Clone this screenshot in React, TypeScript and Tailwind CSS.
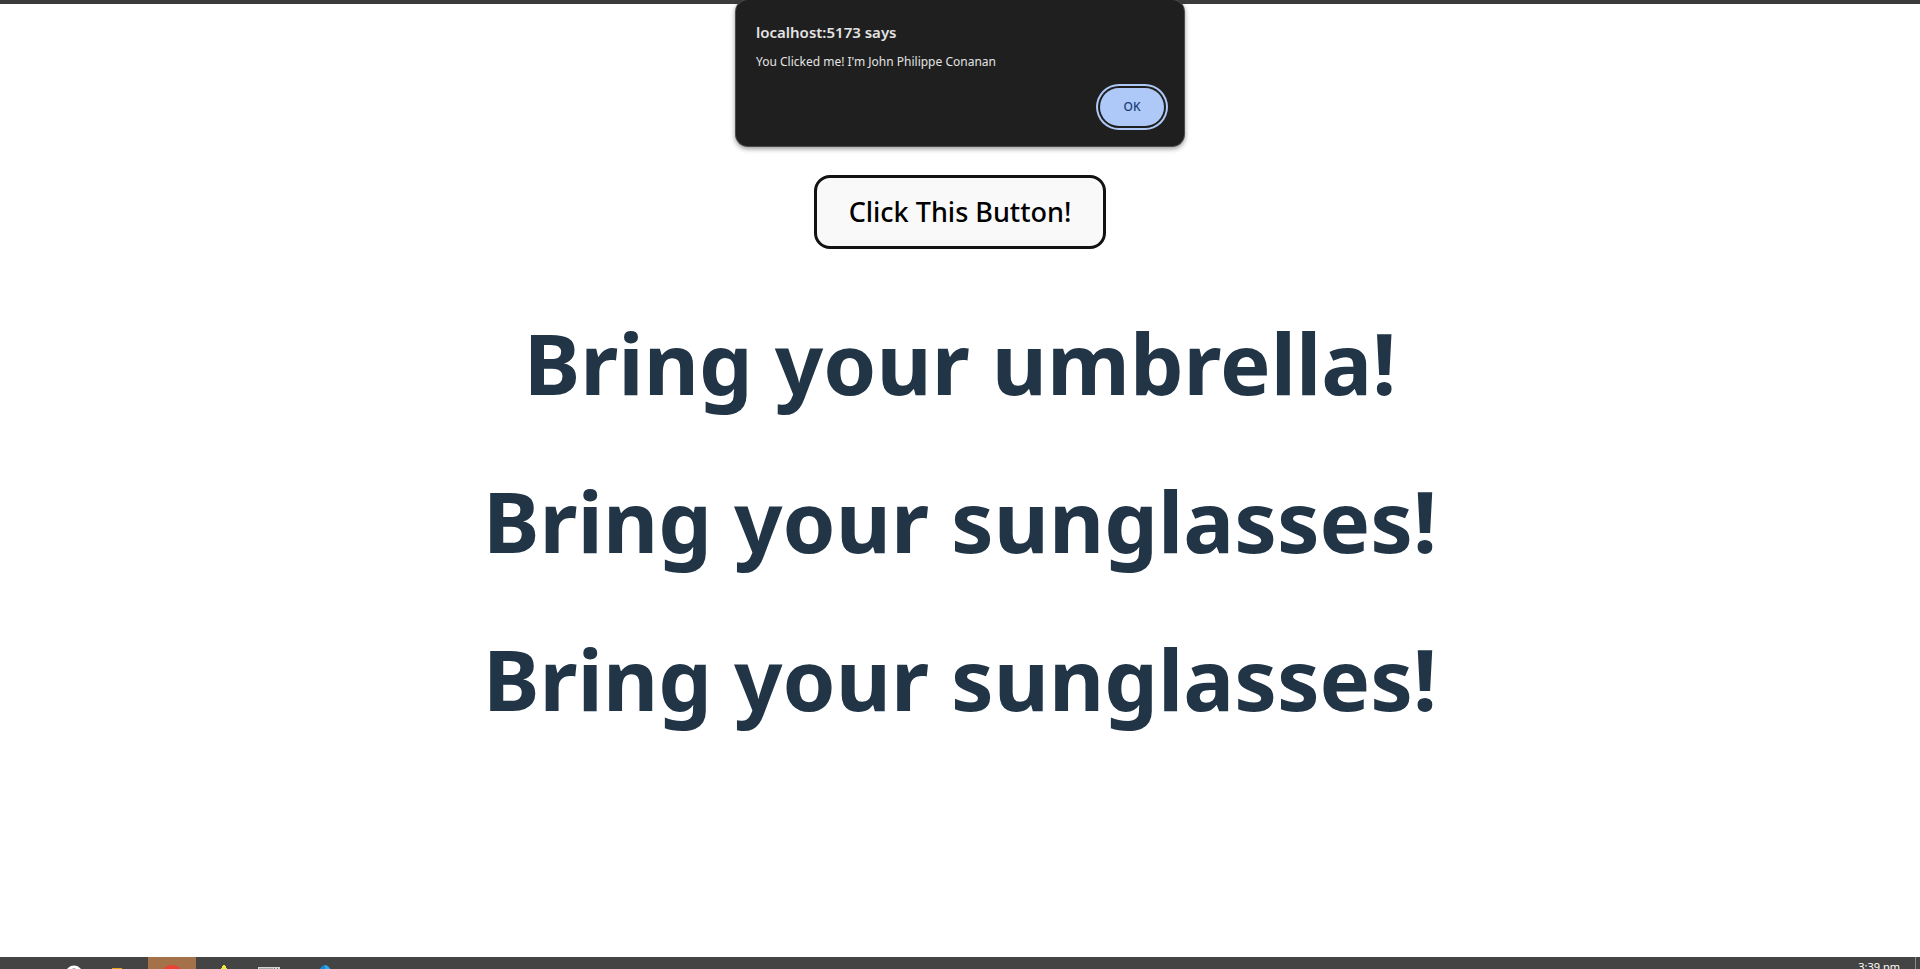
import { useState } from "react";

const forecasts = [
  "Bring your umbrella!",
  "Bring your sunglasses!",
  "Bring your sunglasses!",
];

function AlertDialog({ onClose }: { onClose: () => void }) {
  return (
    <div
      role="alertdialog"
      aria-labelledby="alert-title"
      aria-describedby="alert-message"
      className="absolute top-0 left-1/2 flex w-[448px] -translate-x-1/2 flex-col rounded-xl bg-[#1f1f1f] px-5 pt-5 pb-5 text-[#e3e3e3] shadow-[0_0_0_1px_#4a4a4a,0_2px_5px_1px_rgba(0,0,0,0.4)]"
    >
      <h2 id="alert-title" className="text-[15px] leading-6 font-semibold">
        localhost:5173 says
      </h2>
      <p id="alert-message" className="mt-2 text-xs leading-5">
        You Clicked me! I'm John Philippe Conanan
      </p>
      <button
        type="button"
        onClick={onClose}
        className="mt-4 h-[38px] w-16 self-end rounded-full bg-[#aec9f7] text-xs font-medium text-[#1b3a78] ring-2 ring-[#aec9f7] ring-offset-2 ring-offset-[#1f1f1f]"
      >
        OK
      </button>
    </div>
  );
}

function Taskbar() {
  return (
    <footer className="flex h-3 items-start overflow-hidden bg-[#444444]">
      <div className="flex h-3 items-start">
        <svg width="148" height="12" className="shrink-0" aria-hidden="true">
          <circle cx="74" cy="17" r="7" fill="none" stroke="#ffffff" strokeWidth="3" />
          <path d="M112 11h10v1h-10z" fill="#e3a51c" />
        </svg>
        <span className="flex h-3 w-12 shrink-0 items-start bg-[#a57148]">
          <svg width="48" height="12" aria-hidden="true">
            <circle cx="24" cy="20" r="12" fill="#e94235" />
          </svg>
        </span>
        <svg width="160" height="12" aria-hidden="true">
          <path d="M27 8h2v1h1v2h1v1h-6v-1h1v-2h1z" fill="#f5e642" />
          <path d="M62 10h22v2H62z" fill="#d3d6d9" />
          <path d="M63 11h14v1H63z" fill="#a5a8ab" />
          <path d="M78 11h1v1h-1zM81 11h1v1h-1z" fill="#74777a" />
          <path d="M123 13Q126 8 129 8V13Z" fill="#1a86d0" />
          <path d="M129 8Q132 8 135 13H129Z" fill="#2aa9ee" />
        </svg>
      </div>
      <div className="ml-auto flex h-3 items-start">
        <time className="pt-1 pr-[15px] text-[11px] leading-3 text-white">3:39 pm</time>
        <span className="mr-1 h-3 w-px bg-[#8a8a8a]" />
      </div>
    </footer>
  );
}

export default function App() {
  const [open, setOpen] = useState(true);

  return (
    <div className="relative flex min-h-screen flex-col bg-white font-['Noto_Sans','Open_Sans',sans-serif]">
      <div className="h-1 bg-[#3b3b3b]" />
      <main className="flex flex-1 flex-col items-center pt-[171px]">
        <button
          type="button"
          onClick={() => setOpen(true)}
          className="h-[74px] rounded-2xl border-3 border-[#111213] bg-[#f9f9f9] px-8 text-[27px] font-medium text-black"
        >
          Click This Button!
        </button>
        <div className="mt-[34px] flex flex-col text-center text-[85px] font-bold text-[#213547]">
          {forecasts.map((text, i) => (
            <h1 key={i} className="leading-[158px]">
              {text}
            </h1>
          ))}
        </div>
      </main>
      <Taskbar />
      {open && <AlertDialog onClose={() => setOpen(false)} />}
    </div>
  );
}
